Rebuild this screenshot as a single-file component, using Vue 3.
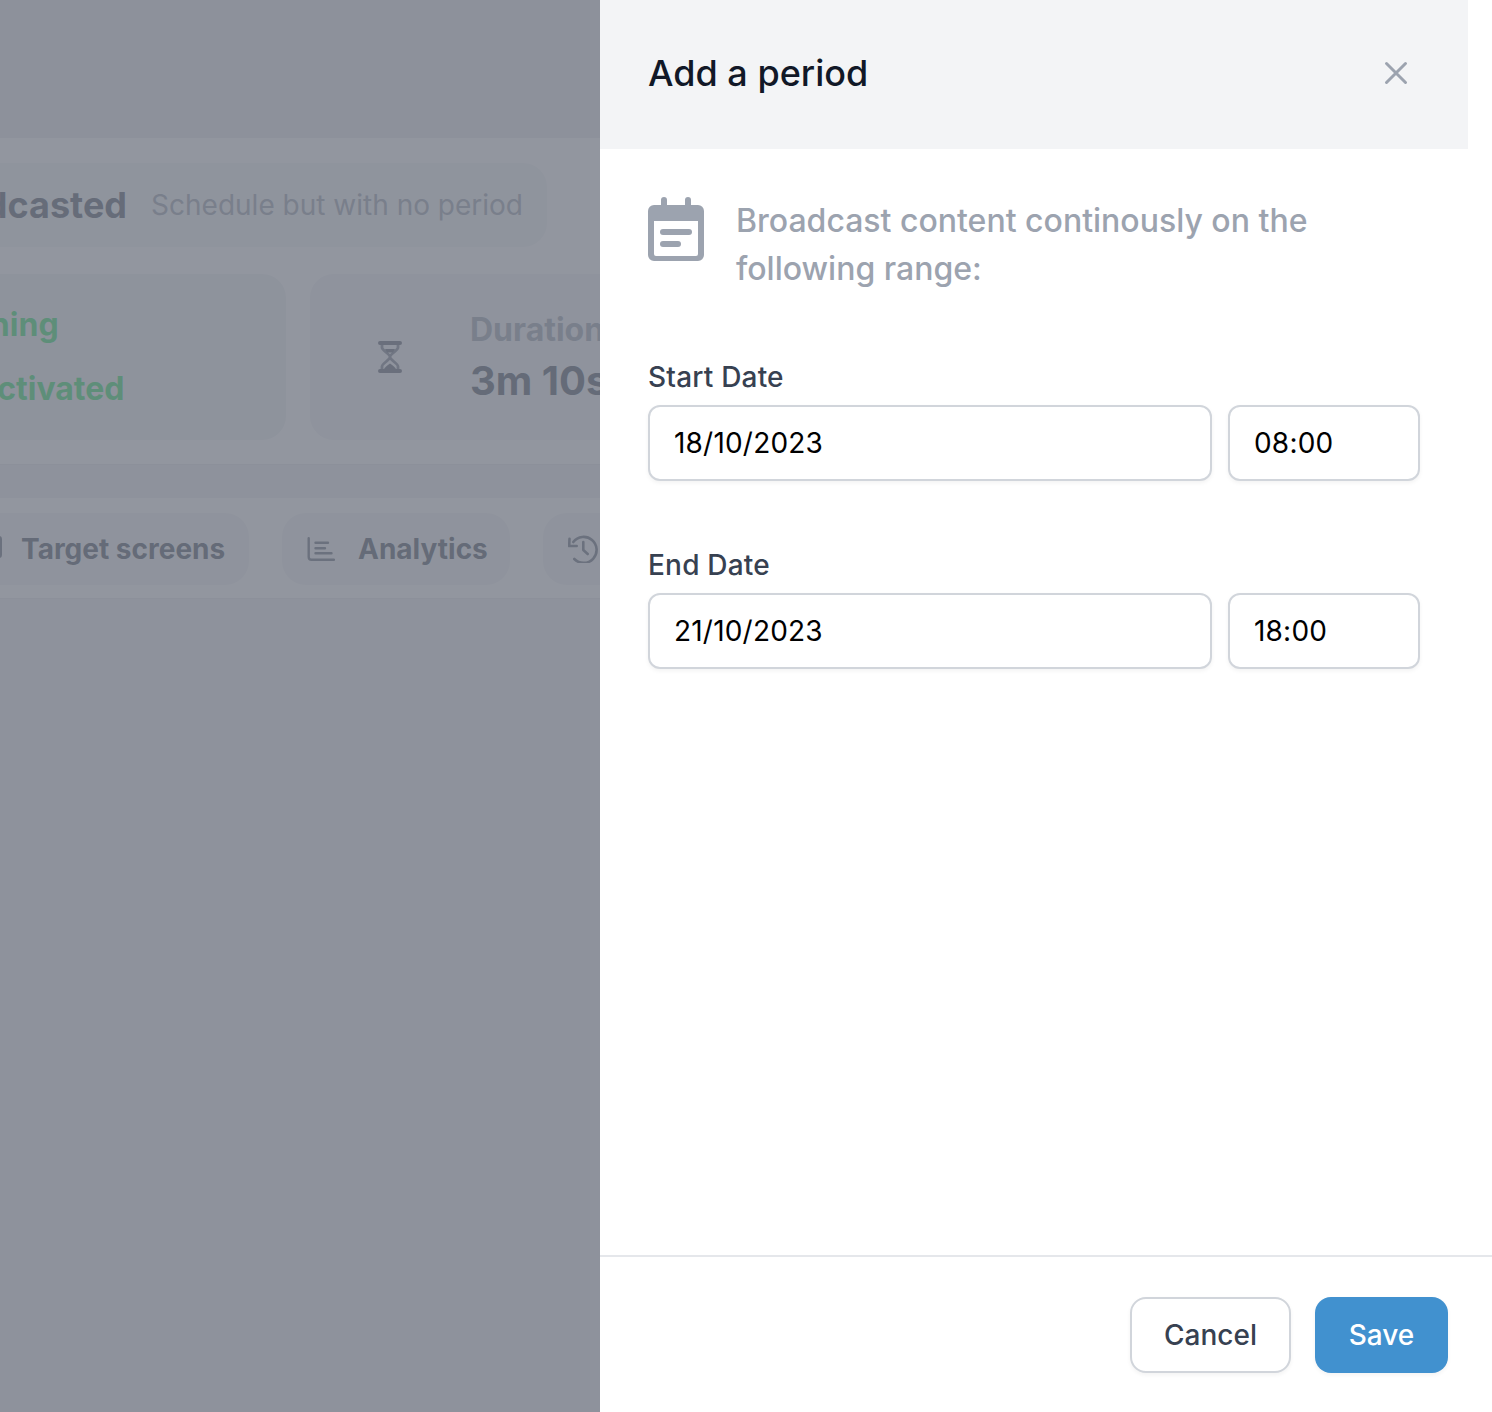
<script setup>
const dates = [
  { label: 'Start Date', date: '18/10/2023', time: '08:00' },
  { label: 'End Date', date: '21/10/2023', time: '18:00' },
]
</script>

<template>
  <div class="screen">
    <div class="page">
      <div class="top-band"></div>
      <section class="summary">
        <div class="status-chip">
          <strong class="status">Broadcasted</strong>
          <span class="status-note">Schedule but with no period</span>
        </div>
        <div class="cards">
          <div class="card state-card">
            <div class="state state-running">Running</div>
            <div class="state state-activated">Activated</div>
          </div>
          <div class="card duration-card">
            <div class="duration-icon">
              <svg width="24" height="32" viewBox="0 0 24 32" fill="none">
                <path d="M4 3v3.500c0 3 8 6.500 8 9.500s-8 6.500-8 9.500V29M20 3v3.500c0 3-8 6.500-8 9.500s8 6.500 8 9.500V29" stroke="#7b8190" stroke-width="2.800" />
                <path d="M7 8h10l-2 3.500h-6zM5.500 29c1-3 4.500-5 6.500-6.500 2 1.500 5.500 3.500 6.500 6.500z" fill="#5f6675" />
                <path d="M2 2h20M2 30h20" stroke="#5f6675" stroke-width="4" stroke-linecap="round" />
              </svg>
            </div>
            <div class="duration-text">
              <div class="duration-label">Duration</div>
              <div class="duration-value">3m 10s</div>
            </div>
          </div>
        </div>
      </section>
      <nav class="tabs">
        <div class="tab tab-target"><span class="tab-sliver"></span>Target screens</div>
        <div class="tab tab-analytics">
          <svg width="28" height="24" viewBox="0 0 28 24" fill="none" stroke="#656c7b" stroke-width="2.400" stroke-linecap="round">
            <path d="M1.700 1.200V20a2.800 2.800 0 0 0 2.800 2.800h22.500M8.500 5.700h12.500M8.500 11.300h9.500M8.500 16.300h16" />
          </svg>
          <span>Analytics</span>
        </div>
        <div class="tab tab-history">
          <svg width="30" height="28" viewBox="0 0 30 28" fill="none" stroke="#656c7b" stroke-width="2.600" stroke-linecap="round" stroke-linejoin="round">
            <path d="M5.300 7A13 13 0 1 1 6.300 24M1.500 3.700L1.200 11l7.500 0M15.300 7v8l4.400 4" />
          </svg>
        </div>
      </nav>
    </div>
    <div class="backdrop"></div>

    <aside class="panel">
      <header class="panel-header">
        <h2 class="panel-title">Add a period</h2>
        <svg class="close" width="24" height="24" viewBox="0 0 24 24" fill="none" stroke="#9ca3af" stroke-width="3" stroke-linecap="round">
          <path d="M2.500 2.500l19 19M21.500 2.500l-19 19" />
        </svg>
      </header>
      <main class="panel-body">
        <div class="intro">
          <svg class="calendar" width="56" height="64" viewBox="0 0 56 64">
            <path fill="#9ca3af" fill-rule="evenodd" d="M13 3a3 3 0 0 1 6 0v5h18V3a3 3 0 0 1 6 0v5h7a6 6 0 0 1 6 6v44a6 6 0 0 1-6 6H6a6 6 0 0 1-6-6V14a6 6 0 0 1 6-6h7zM6 24v33a2 2 0 0 0 2 2h40a2 2 0 0 0 2-2V24z" />
            <rect x="12" y="32" width="32" height="6" rx="3" fill="#9ca3af" />
            <rect x="12" y="44" width="21" height="6" rx="3" fill="#9ca3af" />
          </svg>
          <p class="intro-text">Broadcast content continously on the following range:</p>
        </div>
        <div v-for="d in dates" :key="d.label" class="field">
          <label class="field-label">{{ d.label }}</label>
          <div class="field-row">
            <input class="input input-date" type="text" readonly :value="d.date" />
            <input class="input input-time" type="text" readonly :value="d.time" />
          </div>
        </div>
      </main>
      <footer class="panel-footer">
        <button class="btn btn-cancel" type="button">Cancel</button>
        <button class="btn btn-save" type="button">Save</button>
      </footer>
    </aside>
  </div>
</template>

<style scoped>
.screen {
  position: relative;
  display: flex;
  width: 1492px;
  height: 1412px;
  overflow: hidden;
  font-family: Inter, "Liberation Sans", sans-serif;
  background: #fff;
}
.page {
  width: 600px;
  height: 1412px;
  flex: none;
  overflow: hidden;
  background: #eef0f2;
}
.top-band {
  height: 138px;
  background: #e9ebee;
}
.summary {
  height: 327px;
  background: #fff;
  border-bottom: 1px solid #e5e7eb;
  box-sizing: border-box;
  padding-top: 25px;
}
.status-chip {
  display: flex;
  align-items: center;
  justify-content: flex-end;
  gap: 24px;
  width: 547px;
  height: 84px;
  box-sizing: border-box;
  padding-right: 24px;
  background: #f4f5f7;
  border-radius: 0 24px 24px 0;
  white-space: nowrap;
}
.status {
  font-size: 36px;
  font-weight: 700;
  color: #525a6a;
}
.status-note {
  font-size: 28px;
  font-weight: 400;
  color: #9ca3af;
}
.cards {
  display: flex;
  gap: 24px;
  margin-top: 27px;
}
.card {
  height: 166px;
  background: #f1f2f5;
  border-radius: 24px;
  flex: none;
}
.state-card {
  width: 486px;
  margin-left: -200px;
  background: #eff2f3;
  box-sizing: border-box;
  font-size: 32px;
  font-weight: 700;
  color: #30e06a;
  white-space: nowrap;
}
.state {
  line-height: 40px;
}
.state-running {
  margin: 31px 0 0 129px;
}
.state-activated {
  margin: 24px 0 0 174px;
}
.duration-card {
  display: flex;
  align-items: center;
  width: 400px;
  box-sizing: border-box;
  padding-left: 25px;
}
.duration-icon {
  display: flex;
  align-items: center;
  justify-content: center;
  width: 110px;
  height: 120px;
  background: #f2f3f6;
  border-radius: 24px;
}
.duration-text {
  margin-left: 25px;
  padding-top: 2px;
  white-space: nowrap;
  font-weight: 700;
}
.duration-label {
  font-size: 32px;
  line-height: 40px;
  color: #9ca3af;
}
.duration-value {
  margin-top: 5px;
  font-size: 40px;
  line-height: 52px;
  color: #4b5563;
}
.tabs {
  display: flex;
  gap: 33px;
  align-items: flex-start;
  height: 101px;
  margin-top: 33px;
  padding-top: 15px;
  background: #fff;
  border-bottom: 1px solid #e5e7eb;
  box-sizing: border-box;
}
.tab {
  display: flex;
  align-items: center;
  height: 72px;
  flex: none;
  background: #f3f4f6;
  border-radius: 24px;
  font-size: 28px;
  font-weight: 700;
  color: #4b5563;
  white-space: nowrap;
  box-sizing: border-box;
}
.tab-target {
  width: 249px;
  padding-left: 21px;
  border-radius: 0 24px 24px 0;
  position: relative;
}
.tab-sliver {
  position: absolute;
  left: -2px;
  top: 23px;
  width: 4px;
  height: 22px;
  border-radius: 0 3px 3px 0;
  background: #656c7b;
}
.tab-analytics {
  width: 228px;
  padding-left: 25px;
  gap: 23px;
}
.tab-history {
  width: 120px;
  padding-left: 25px;
}
.backdrop {
  position: absolute;
  left: 0;
  top: 0;
  width: 600px;
  height: 1412px;
  background: rgba(110, 115, 127, 0.75);
}
.panel {
  display: flex;
  flex-direction: column;
  width: 892px;
  height: 1412px;
  flex: none;
  background: #fff;
}
.panel-header {
  display: flex;
  align-items: center;
  justify-content: space-between;
  width: 868px;
  height: 149px;
  box-sizing: border-box;
  padding: 0 60px 4px 48px;
  background: #f3f4f6;
}
.panel-title {
  margin: 0;
  font-size: 36px;
  font-weight: 500;
  color: #111827;
}
.panel-body {
  flex: 1;
  padding: 48px 72px 0 48px;
}
.intro {
  display: flex;
  gap: 32px;
  align-items: flex-start;
}
.calendar {
  flex: none;
}
.intro-text {
  margin: 0;
  width: 620px;
  font-size: 32px;
  line-height: 48px;
  font-weight: 500;
  color: #9ca3af;
}
.field {
  margin-top: 64px;
}
.field-label {
  display: block;
  font-size: 28px;
  line-height: 40px;
  font-weight: 500;
  letter-spacing: 0.2px;
  color: #374151;
}
.field-row {
  display: flex;
  gap: 16px;
  margin-top: 8px;
}
.input {
  height: 76px;
  box-sizing: border-box;
  padding: 0 24px;
  border: 2px solid #d1d5db;
  border-radius: 12px;
  box-shadow: 0 2px 4px rgba(0, 0, 0, 0.05);
  background: #fff;
  font-family: Inter, "Liberation Sans", sans-serif;
  font-size: 28px;
  letter-spacing: 0.2px;
  color: #000;
  outline: none;
}
.input-date {
  width: 564px;
}
.input-time {
  width: 192px;
}
.panel-footer {
  display: flex;
  justify-content: flex-end;
  gap: 24px;
  height: 157px;
  box-sizing: border-box;
  padding: 40px 44px 0 0;
  border-top: 2px solid #e5e7eb;
}
.btn {
  height: 76px;
  box-sizing: border-box;
  border-radius: 16px;
  font-family: Inter, "Liberation Sans", sans-serif;
  font-size: 28px;
  font-weight: 500;
  padding: 0;
}
.btn-cancel {
  width: 161px;
  background: #fff;
  border: 2px solid #d1d5db;
  color: #374151;
  box-shadow: 0 2px 4px rgba(0, 0, 0, 0.05);
}
.btn-save {
  width: 133px;
  background: #4191cf;
  border: none;
  color: #fff;
  box-shadow: 0 2px 4px rgba(0, 0, 0, 0.05);
}
</style>
